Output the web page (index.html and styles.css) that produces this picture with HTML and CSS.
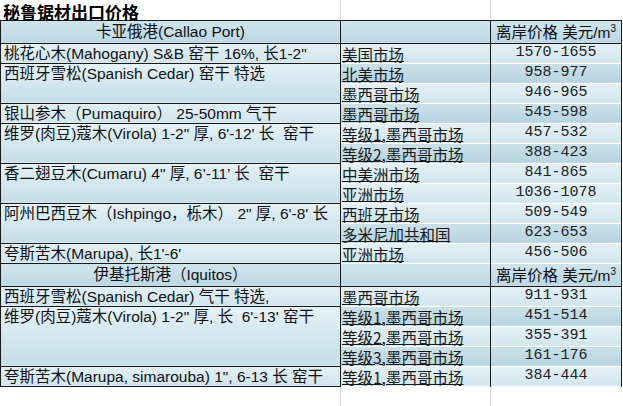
FILE: index.html
```html
<!DOCTYPE html>
<html lang="zh-CN">
<head>
<meta charset="utf-8">
<title>秘鲁锯材出口价格</title>
<link rel="stylesheet" href="styles.css">
</head>
<body>
<table class="sheet">
  <colgroup><col class="c1"><col class="c2"><col class="c3"></colgroup>
  <tr class="title"><td class="t">秘鲁锯材出口价格</td><td></td><td></td></tr>
  <tr class="hdr"><td class="port">卡亚俄港(Callao Port)</td><td></td><td class="unit">离岸价格 美元/m<sup>3</sup></td></tr>
  <tr><td class="w one">桃花心木(Mahogany) S&amp;B 窑干 16%, 长1-2"</td><td class="m l"><span>美国市场</span></td><td class="p l">1570-1655</td></tr>
  <tr><td class="w" rowspan="2">西班牙雪松(Spanish Cedar) 窑干 特选</td><td class="m d"><span>北美市场</span></td><td class="p d">958-977</td></tr>
  <tr><td class="m l"><span>墨西哥市场</span></td><td class="p l">946-965</td></tr>
  <tr><td class="w one">银山参木（Pumaquiro） 25-50mm 气干</td><td class="m d"><span>墨西哥市场</span></td><td class="p d">545-598</td></tr>
  <tr><td class="w" rowspan="2">维罗(肉豆)蔻木(Virola) 1-2" 厚, 6'-12' 长&nbsp; 窑干</td><td class="m l"><span>等级1,墨西哥市场</span></td><td class="p l">457-532</td></tr>
  <tr><td class="m d"><span>等级2,墨西哥市场</span></td><td class="p d">388-423</td></tr>
  <tr><td class="w" rowspan="2">香二翅豆木(Cumaru) 4" 厚, 6’-11’ 长&nbsp; 窑干</td><td class="m l"><span>中美洲市场</span></td><td class="p l">841-865</td></tr>
  <tr><td class="m l"><span>亚洲市场</span></td><td class="p l">1036-1078</td></tr>
  <tr><td class="w" rowspan="2">阿州巴西豆木（Ishpingo，栎木） 2" 厚, 6'-8' 长</td><td class="m l"><span>西班牙市场</span></td><td class="p l">509-549</td></tr>
  <tr><td class="m d"><span>多米尼加共和国</span></td><td class="p d">623-653</td></tr>
  <tr><td class="w one">夸斯苦木(Marupa), 长1'-6'</td><td class="m l"><span>亚洲市场</span></td><td class="p l">456-506</td></tr>
  <tr class="hdr"><td class="port">伊基托斯港（Iquitos）</td><td></td><td class="unit">离岸价格 美元/m<sup>3</sup></td></tr>
  <tr><td class="w one">西班牙雪松(Spanish Cedar) 气干 特选,</td><td class="m l"><span>墨西哥市场</span></td><td class="p l">911-931</td></tr>
  <tr><td class="w" rowspan="3">维罗(肉豆)蔻木(Virola) 1-2" 厚, 长&nbsp; 6'-13' 窑干</td><td class="m d"><span>等级1,墨西哥市场</span></td><td class="p d">451-514</td></tr>
  <tr><td class="m l"><span>等级2,墨西哥市场</span></td><td class="p l">355-391</td></tr>
  <tr><td class="m d"><span>等级3,墨西哥市场</span></td><td class="p d">161-176</td></tr>
  <tr><td class="w one">夸斯苦木(Marupa, simarouba) 1", 6-13 长 窑干</td><td class="m l"><span>等级1,墨西哥市场</span></td><td class="p l">384-444</td></tr>
  <tr class="blank"><td></td><td></td><td></td></tr>
</table>
</body>
</html>
```
FILE: styles.css
```css
html, body {
  margin: 0;
  padding: 0;
  background: #ffffff;
}
body {
  width: 623px;
  height: 406px;
  overflow: hidden;
  font-family: "Liberation Sans", "Noto Sans CJK SC", sans-serif;
  color: #111;
}
.sheet {
  border-collapse: collapse;
  table-layout: fixed;
  width: 621px;
}
.c1 { width: 340px; }
.c2 { width: 150px; }
.c3 { width: 131px; }
.sheet td {
  padding: 0;
  white-space: nowrap;
  overflow: hidden;
  border: 1px solid #1a1a1a;
  font-size: 15.5px;
  line-height: 18px;
  vertical-align: middle;
}
.sheet tr { height: 20px; }
.sheet tr.hdr { height: 23px; }
.title { height: 19px; }
.title td {
  border-top: none;
  border-left: 1px solid #ffffff;
  border-right: 1px solid #d9d9d9;
  background: #ffffff;
}
.title td:last-child { border-right: 1px solid #ffffff; }
.sheet td.t {
  font-family: "Noto Sans CJK SC", sans-serif;
  font-weight: 700;
  font-size: 17px;
  line-height: 14px;
  padding: 5px 0 0 2px;
  vertical-align: top;
  overflow: visible;
  color: #000;
}
.hdr td {
  background: linear-gradient(#cfe5ee, #bcd7e3);
}
.port {
  text-align: center;
}
.sheet td.unit {
  font-family: "Liberation Sans", "Noto Sans CJK SC", sans-serif;
  padding-left: 5px;
  text-align: left;
  vertical-align: bottom;
  line-height: 20px;
}
.unit sup {
  font-size: 10px;
  line-height: 0;
  vertical-align: 6px;
}
.sheet td.w {
  padding-left: 3px;
  vertical-align: top;
  line-height: 19px;
  background: linear-gradient(#e6f2f6 0, #d6e9f0 40%, #c6dee8 100%);
}
.sheet td.w.one {
  background: linear-gradient(#e3f0f5, #d1e5ed);
}
.m, .p {
  border-top-color: transparent !important;
  border-bottom-color: transparent !important;
}
.sheet td.m {
  font-family: "Noto Sans CJK SC", sans-serif;
  padding-left: 1px;
  vertical-align: bottom;
  color: #1a1a1a;
}
.m span {
  text-decoration: underline;
  text-decoration-thickness: 1px;
  text-underline-offset: 0px;
}
.sheet td.p {
  font-family: "Liberation Mono", monospace;
  font-size: 15px;
  text-align: center;
  color: #222;
}
.l { background: linear-gradient(#e4f0f5, #d2e6ee); }
.d { background: linear-gradient(#cbe1ea, #b7d4e0); }
.blank { height: 21px; }
.blank td {
  border-bottom: none;
  border-left: 1px solid #ffffff;
  border-right: 1px solid #d9d9d9;
  background: #ffffff;
}
.blank td:last-child { border-right: 1px solid #ffffff; }
```
